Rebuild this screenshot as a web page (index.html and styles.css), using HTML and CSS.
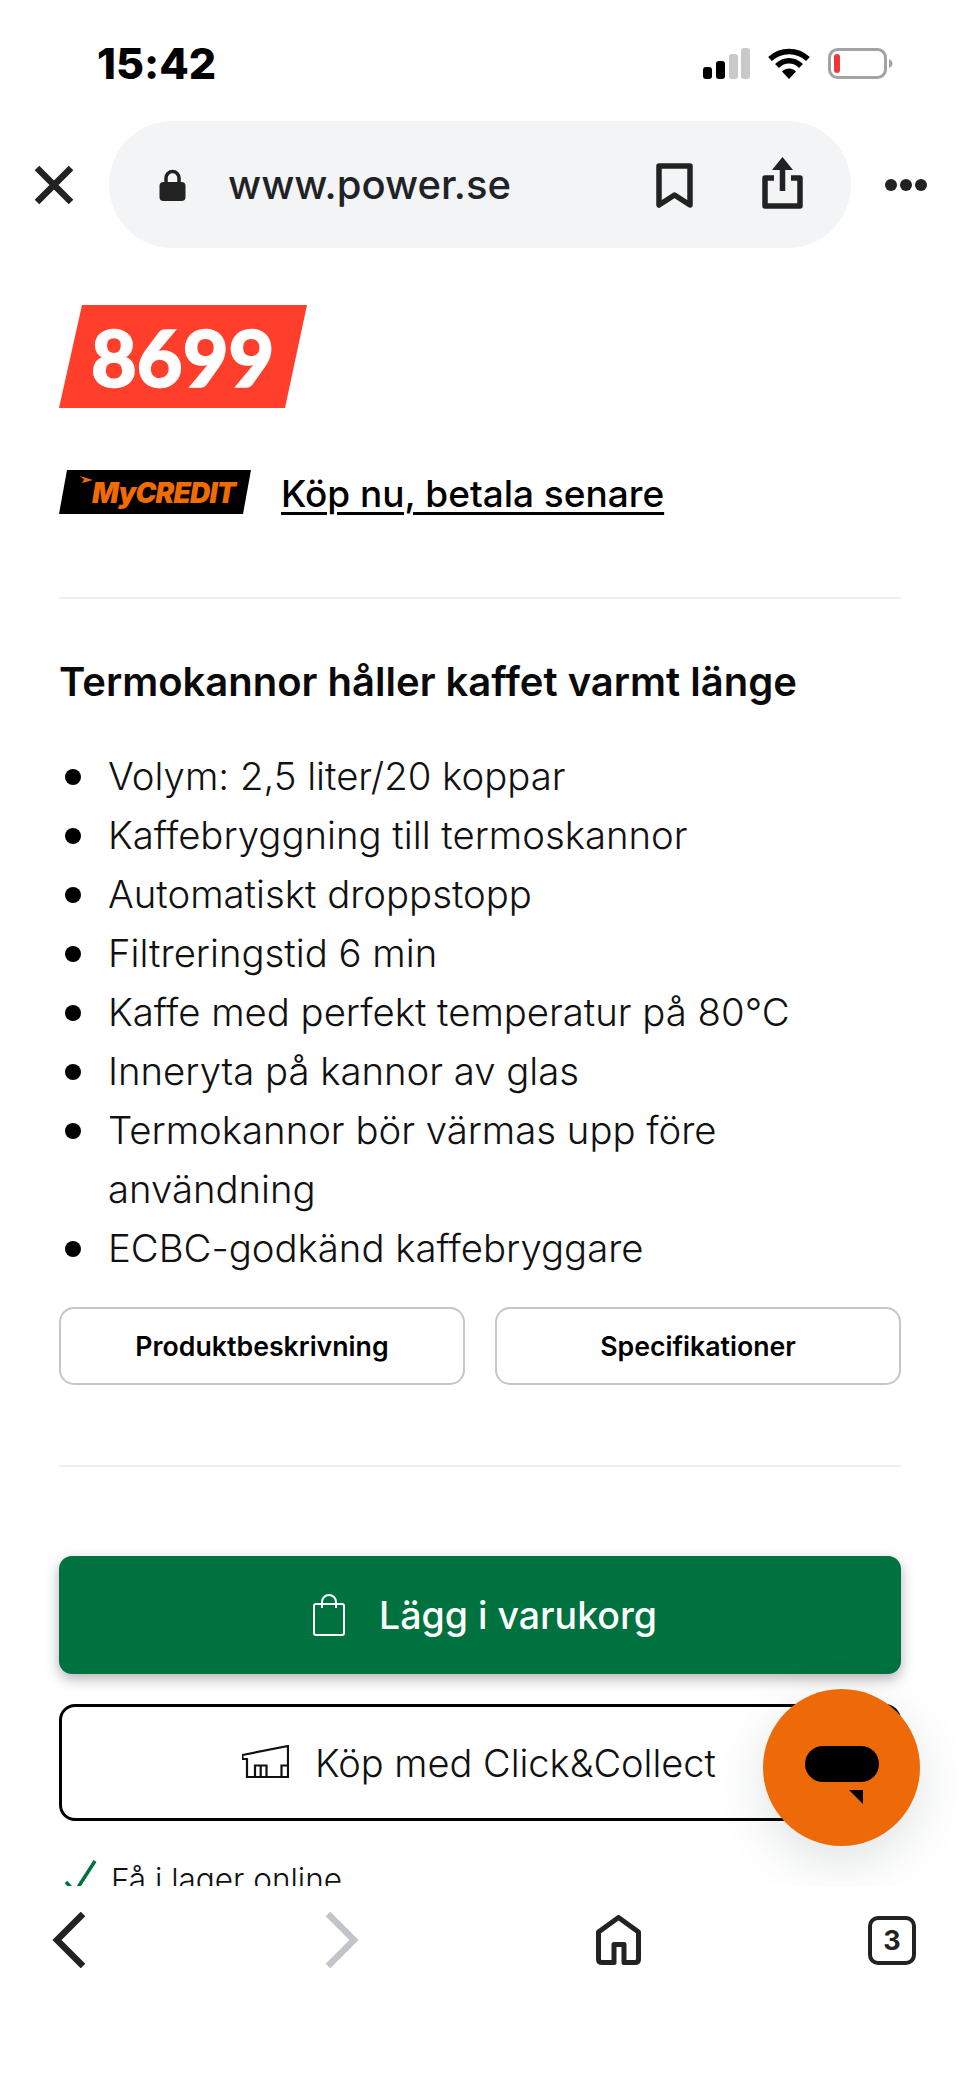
FILE: index.html
```html
<!DOCTYPE html>
<html lang="sv">
<head>
  <meta charset="UTF-8" />
  <meta name="viewport" content="width=device-width, initial-scale=1.0"/>
  <title>Power.se</title>
  <link rel="stylesheet" href="styles.css">
</head>
<body>
<div class="phone">

  <!-- Status bar -->
  <div class="status-bar">
    <span class="time">15:42</span>
    <div class="status-icons">
      <svg class="signal" width="47" height="31" viewBox="0 0 47 31">
        <rect x="0" y="19" width="9" height="12" rx="3" fill="#000"/>
        <rect x="13" y="13" width="9" height="18" rx="3" fill="#000"/>
        <rect x="26" y="6" width="9" height="25" rx="3" fill="#c9c9c9"/>
        <rect x="38" y="0" width="9" height="31" rx="3" fill="#c9c9c9"/>
      </svg>
      <svg class="wifi" width="42" height="31" viewBox="0 0 42 31">
        <path d="M2 11C13 1 29 1 40 11" fill="none" stroke="#000" stroke-width="5.5"/>
        <path d="M9 18C16 11 26 11 33 18" fill="none" stroke="#000" stroke-width="5.5"/>
        <path d="M14 23.500C18 19.500 24 19.500 28 23.500L21 31Z" fill="#000"/>
      </svg>
      <svg class="battery" width="65" height="31" viewBox="0 0 65 31">
        <rect x="1.500" y="1.500" width="56" height="28" rx="8" fill="none" stroke="#a3a3a3" stroke-width="3"/>
        <rect x="6" y="6" width="6" height="19" rx="3" fill="#f0353b"/>
        <path d="M61 11C63.500 12 64.500 14 64.500 15.500C64.500 17 63.500 19 61 20Z" fill="#a3a3a3"/>
      </svg>
    </div>
  </div>

  <!-- Browser bar -->
  <div class="browser-bar">
    <svg class="close-icon" width="40" height="40" viewBox="0 0 40 40">
      <path d="M3 3L37 37M37 3L3 37" stroke="#222" stroke-width="6.500" fill="none"/>
    </svg>
    <div class="url-pill">
      <svg class="lock-icon" width="27" height="32" viewBox="0 0 27 32">
        <path d="M7 14V9a6.500 6.500 0 0 1 13 0v5" fill="none" stroke="#222" stroke-width="3.500"/>
        <rect x="0.500" y="13" width="26" height="19" rx="4" fill="#222"/>
      </svg>
      <span class="url">www.power.se</span>
      <svg class="bookmark-icon" width="37" height="46" viewBox="0 0 37 46">
        <path d="M3 3H34V42L18.500 32L3 42Z" fill="none" stroke="#222" stroke-width="5.500" stroke-linejoin="round"/>
      </svg>
      <svg class="share-icon" width="41" height="52" viewBox="0 0 41 52">
        <path d="M12 21H3V49H38V21H29" fill="none" stroke="#222" stroke-width="5.500" stroke-linejoin="round"/>
        <path d="M20.500 34V8" stroke="#222" stroke-width="5.500"/>
        <path d="M10 13L20.500 0L31 13Z" fill="#222"/>
      </svg>
    </div>
    <div class="more-dots"><i></i><i></i><i></i></div>
  </div>

  <!-- Product -->
  <main class="content">
    <div class="price">8699</div>

    <div class="credit-row">
      <div class="credit-logo">
        <svg class="credit-arrow" width="13" height="7" viewBox="0 0 13 7"><path d="M0 0L13 4L2 7L4 3.500Z" fill="#f06c00"/></svg>
        <span>MyCREDIT</span>
      </div>
      <a class="credit-link" href="#">Köp nu, betala senare</a>
    </div>

    <hr class="divider first">

    <h1>Termokannor håller kaffet varmt länge</h1>

    <ul class="features">
      <li>Volym: 2,5 liter/20 koppar</li>
      <li>Kaffebryggning till termoskannor</li>
      <li>Automatiskt droppstopp</li>
      <li>Filtreringstid 6 min</li>
      <li>Kaffe med perfekt temperatur på 80°C</li>
      <li>Inneryta på kannor av glas</li>
      <li>Termokannor bör värmas upp före användning</li>
      <li>ECBC-godkänd kaffebryggare</li>
    </ul>

    <div class="info-buttons">
      <a class="info-btn" href="#">Produktbeskrivning</a>
      <a class="info-btn" href="#">Specifikationer</a>
    </div>

    <hr class="divider second">

    <button class="btn-cart">
      <svg width="32" height="42" viewBox="0 0 32 42">
        <rect x="1" y="10" width="30" height="31" rx="2" fill="none" stroke="#fff" stroke-width="2"/>
        <path d="M9 14V8a7 7 0 0 1 14 0v6" fill="none" stroke="#fff" stroke-width="2"/>
      </svg>
      Lägg i varukorg
    </button>

    <button class="btn-collect">
      <svg width="47" height="35" viewBox="0 0 47 35">
        <path d="M0.500 10L46 1V32H5V14H0.500Z" fill="none" stroke="#111" stroke-width="2.200"/>
        <path d="M13 32V20.500H24.500V32M18.700 20.500V32M39.500 32V20.500H46" fill="none" stroke="#111" stroke-width="2.200"/>
      </svg>
      Köp med Click&amp;Collect
    </button>

    <div class="stock">
      <svg width="33" height="34" viewBox="0 0 33 34"><path d="M2 22L11 32L31 1" fill="none" stroke="#00723f" stroke-width="3.500"/></svg>
      Få i lager online
    </div>
  </main>

  <!-- Bottom toolbar -->
  <nav class="toolbar">
    <svg class="tool-back" width="34" height="56" viewBox="0 0 34 56">
      <path d="M31 2L5 28L31 54" fill="none" stroke="#222" stroke-width="6.500"/>
    </svg>
    <svg class="tool-forward" width="34" height="56" viewBox="0 0 34 56">
      <path d="M3 2L29 28L3 54" fill="none" stroke="#c1c4c9" stroke-width="6.500"/>
    </svg>
    <svg class="tool-home" width="46" height="51" viewBox="0 0 46 51">
      <path d="M2.500 17L22.500 2.500L42.500 17V44Q42.500 47.500 39 47.500H28V29.500H18V47.500H6Q2.500 47.500 2.500 44Z" fill="none" stroke="#222" stroke-width="5" stroke-linejoin="round"/>
    </svg>
    <div class="tool-tabs">3</div>
  </nav>

  <!-- Chat -->
  <button class="chat-btn" aria-label="Chat">
    <svg width="74" height="58" viewBox="0 0 74 58">
      <rect x="0" y="0" width="74" height="36" rx="18" fill="#000"/>
      <path d="M44 44H58V58Z" fill="#000"/>
    </svg>
  </button>

</div>
</body>
</html>
```

FILE: styles.css
```css
/* Global */
* {
  box-sizing: border-box;
}

body {
  margin: 0;
  background-color: #fff;
  font-family: Inter, "Noto Sans", sans-serif;
  font-variant-ligatures: none;
  color: #111;
}

.phone {
  position: relative;
  width: 960px;
  height: 2078px;
  display: flex;
  flex-direction: column;
  overflow: hidden;
  background-color: #fff;
}

/* Status bar */
.status-bar {
  height: 121px;
  flex: none;
  display: flex;
  justify-content: space-between;
  align-items: flex-start;
  padding: 48px 65px 0 97px;
}

.time {
  font-size: 43px;
  font-weight: 800;
  line-height: 31px;
  color: #000;
}

.status-icons {
  display: flex;
  gap: 18px;
  height: 31px;
  margin-right: 2px;
}

/* Browser bar */
.browser-bar {
  height: 127px;
  flex: none;
  display: flex;
  align-items: center;
  padding-left: 34px;
}

.close-icon {
  flex: none;
}

.url-pill {
  width: 742px;
  height: 127px;
  margin-left: 35px;
  padding-left: 50px;
  display: flex;
  align-items: center;
  background-color: #f3f4f6;
  border-radius: 64px;
}

.url {
  width: 428px;
  margin-left: 42px;
  font-size: 40px;
  font-weight: 500;
  color: #1f2226;
}

.bookmark-icon {
  margin-top: 2px;
}

.share-icon {
  margin-left: 69px;
  margin-top: -3px;
}

.more-dots {
  display: flex;
  gap: 3px;
  margin-left: 34px;
}

.more-dots i {
  width: 12px;
  height: 12px;
  border-radius: 50%;
  background-color: #222;
}

/* Product */
.content {
  height: 1638px;
  flex: none;
  padding: 57px 59px 0;
  overflow: hidden;
}

.price {
  width: 248px;
  height: 103px;
  padding-left: 32px;
  background-color: #ff3f2b;
  clip-path: polygon(23px 0, 100% 0, 226px 100%, 0 100%);
  color: #fff;
  font-family: Lato, sans-serif;
  font-size: 79px;
  font-weight: 900;
  line-height: 103px;
  -webkit-text-stroke: 1.5px #fff;
}

.credit-row {
  height: 44px;
  margin-top: 62px;
  display: flex;
  align-items: center;
}

.credit-logo {
  position: relative;
  width: 192px;
  height: 44px;
  padding-left: 33px;
  background-color: #000;
  clip-path: polygon(8px 0, 100% 0, 184px 100%, 0 100%);
  color: #f06c00;
  font-size: 28px;
  font-weight: 900;
  font-style: italic;
  letter-spacing: -0.8px;
  line-height: 46px;
}

.credit-arrow {
  position: absolute;
  left: 21px;
  top: 6px;
}

.credit-link {
  margin-left: 30px;
  margin-top: 2px;
  color: #000;
  font-size: 37px;
  font-weight: 500;
  text-decoration: underline;
  text-underline-offset: 5px;
  text-decoration-thickness: 3px;
}

.divider {
  height: 2px;
  margin: 0;
  border: none;
  background-color: #eee;
}

.divider.first {
  margin-top: 83px;
}

.divider.second {
  margin-top: 80px;
}

h1 {
  margin: 58px 0 0;
  font-size: 40px;
  font-weight: 600;
  line-height: 50px;
  color: #0a0a0a;
}

.features {
  margin: 40px 0 0;
  padding: 0;
  list-style: none;
}

.features li {
  display: flex;
  font-size: 38.300px;
  font-weight: 350;
  line-height: 59px;
  color: #111;
}

.features li::before {
  content: "";
  flex: none;
  width: 16px;
  height: 16px;
  margin: 22px 27px 0 6px;
  border-radius: 50%;
  background-color: #000;
}

.info-buttons {
  display: flex;
  gap: 30px;
  margin-top: 29px;
}

.info-btn {
  flex: 1;
  height: 78px;
  display: flex;
  align-items: center;
  justify-content: center;
  border: 2.5px solid #c6c6c6;
  border-radius: 15px;
  color: #000;
  font-size: 26.700px;
  font-weight: 600;
  text-decoration: none;
}

.btn-cart,
.btn-collect {
  width: 100%;
  display: flex;
  align-items: center;
  justify-content: center;
  font-family: inherit;
  font-variant-ligatures: none;
}

.btn-cart {
  height: 118px;
  margin-top: 89px;
  padding-left: 16px;
  gap: 34px;
  border: none;
  border-radius: 13px;
  background-color: #00723f;
  box-shadow: 0 5px 14px rgba(0,0,0,0.3);
  color: #fff;
  font-size: 37.500px;
  font-weight: 500;
}

.btn-collect {
  height: 117px;
  margin-top: 30px;
  padding-left: 4px;
  gap: 26px;
  border: 3px solid #000;
  border-radius: 16px;
  background-color: #fff;
  color: #111;
  font-size: 38px;
  font-weight: 350;
}

.stock {
  display: flex;
  align-items: flex-start;
  gap: 14px;
  margin-top: 39px;
  padding-left: 5px;
  font-size: 31.500px;
  font-weight: 350;
  line-height: 40px;
}

/* Bottom toolbar */
.toolbar {
  flex: 1;
  position: relative;
  z-index: 2;
  display: flex;
  align-items: flex-start;
  padding: 26px 0 0 52px;
  background-color: #fff;
}

.tool-forward {
  margin-left: 239px;
}

.tool-home {
  margin-left: 237px;
  margin-top: 3px;
}

.tool-tabs {
  width: 48px;
  height: 49px;
  margin-left: 226px;
  margin-top: 4px;
  display: flex;
  align-items: center;
  justify-content: center;
  border: 4.500px solid #222;
  border-radius: 10px;
  font-size: 27px;
  font-weight: 700;
  color: #222;
}

/* Chat */
.chat-btn {
  position: absolute;
  left: 763px;
  top: 1689px;
  z-index: 1;
  width: 157px;
  height: 157px;
  padding: 57px 0 0;
  display: flex;
  align-items: flex-start;
  justify-content: center;
  border: none;
  border-radius: 50%;
  background-color: #ee6a08;
  box-shadow: 0 16px 50px rgba(60,80,90,0.16);
}
```
